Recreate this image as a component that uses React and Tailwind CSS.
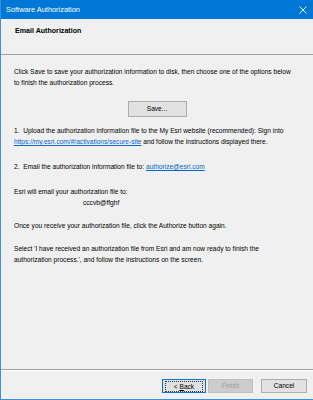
export default function App() {
  return (
    <div
      className="w-[313px] h-[400px] flex flex-col bg-[#f0f0f0] border-l border-b border-[#3d8fde] overflow-hidden"
      style={{ fontFamily: '"Liberation Sans", Arial, sans-serif' }}
    >
      {/* Title bar */}
      <div className="h-[19px] shrink-0 bg-[#0078d7] flex items-center justify-between pl-[5px] pr-[6px] text-white">
        <span className="text-[7.4px]">Software Authorization</span>
        <svg width="8" height="8" viewBox="0 0 8 8" className="text-white">
          <path d="M0.5 0.5 L7.5 7.5 M7.5 0.5 L0.5 7.5" stroke="currentColor" strokeWidth="0.9" />
        </svg>
      </div>

      {/* Header */}
      <div className="h-[36px] shrink-0 pl-[14px] pt-[7px] border-b border-[#a0a0a0]">
        <div className="text-[7.1px] font-bold text-black leading-[11px]">Email Authorization</div>
      </div>

      {/* Body */}
      <div className="flex-1 pl-[13px] pr-[10px] pt-[11px] text-[6.6px] leading-[11px] text-black border-b border-[#a0a0a0]">
        <p>
          Click Save to save your authorization information to disk, then choose one of the options below
          <br />
          to finish the authorization process.
        </p>
        <div className="flex justify-center mt-[13px] pr-[3px]">
          <button className="w-[59px] h-[16px] bg-[#e1e1e1] border border-[#adadad] text-[6.6px] leading-none">
            Save...
          </button>
        </div>
        <p className="mt-[8px]">
          1.&nbsp; Upload the authorization information file to the My Esri website (recommended): Sign into
          <br />
          <span className="text-[#0066cc] underline">https://my.esri.com/#/activations/secure-site</span> and follow the instructions displayed there.
        </p>
        <p className="mt-[14px]">
          2.&nbsp; Email the authorization information file to:{" "}
          <span className="text-[#0066cc] underline">authorize@esri.com</span>
        </p>
        <p className="mt-[14px]">Esri will email your authorization file to:</p>
        <p className="pl-[69px]">cccvb@ffghf</p>
        <p className="mt-[12px]">Once you receive your authorization file, click the Authorize button again.</p>
        <p className="mt-[12px]">
          Select 'I have received an authorization file from Esri and am now ready to finish the
          <br />
          authorization process.', and follow the instructions on the screen.
        </p>
      </div>

      {/* Footer */}
      <div className="h-[29px] shrink-0 flex justify-end items-start pt-[8px] pr-[6px] text-[6.6px] border-t border-white">
        <button className="w-[44px] h-[14px] bg-[#e1e1e1] border border-[#0078d7] flex items-center justify-center p-[1px]">
          <span className="border border-dotted border-[#333] px-[8px] leading-[9px]">
            &lt; <span className="underline">B</span>ack
          </span>
        </button>
        <button className="ml-[2px] w-[45px] h-[14px] bg-[#cccccc] border border-[#bfbfbf] text-[#a0a0a0] leading-none">
          Finish
        </button>
        <button className="ml-[8px] w-[46px] h-[14px] bg-[#e1e1e1] border border-[#adadad] leading-none">
          Cancel
        </button>
      </div>
    </div>
  );
}
